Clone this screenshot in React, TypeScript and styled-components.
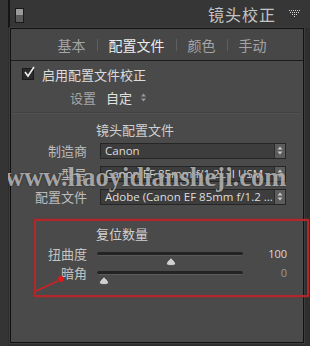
import React from "react";
import styled, { createGlobalStyle } from "styled-components";

const GlobalStyle = createGlobalStyle`
  html, body {
    margin: 0;
    padding: 0;
    background: #2c2c2c;
  }
  body {
    font-family: "Noto Sans CJK SC", "Noto Sans", sans-serif;
  }
`;

const Page = styled.div`
  width: 310px;
  height: 346px;
  display: flex;
  flex-direction: column;
  background: #2e2e2e;
  border-left: 8px solid #343434;
  box-sizing: border-box;
  position: relative;
  overflow: hidden;
`;

const Header = styled.div`
  height: 28px;
  display: flex;
  align-items: center;
  padding: 0 10px 0 5px;
  background: #363636;
  border-left: 2px solid #151515;
`;

const SoloBox = styled.div`
  width: 7px;
  height: 13px;
  border: 1px solid #1a1a1a;
  background: linear-gradient(#9a9a9a 0 50%, #5a5a5a 50% 100%);
  margin-top: 2px;
`;

const Title = styled.div`
  flex: 1;
  text-align: right;
  color: #c4c4c4;
  font-size: 16px;
  letter-spacing: 1px;
  padding-right: 13px;
`;

const Panel = styled.div`
  flex: 1;
  margin: 0 6px 3px 2px;
  border: 1px solid #121212;
  outline: 1px solid #3c3c3c;
  background: #4a4a4a;
  display: flex;
  flex-direction: column;
  position: relative;
`;

const Tabs = styled.div`
  height: 31px;
  display: flex;
  align-items: center;
  justify-content: center;
  border-bottom: 1px solid #1c1c1c;
  background: #474747;
  padding-left: 10px;
`;

const Tab = styled.span<{ $active?: boolean }>`
  font-size: 14px;
  color: ${({ $active }) => ($active ? "#ececec" : "#a4a4a4")};
  padding: 0 11px;
`;

const TabSep = styled.span`
  width: 1px;
  height: 12px;
  background: #5e5e5e;
`;

const Section = styled.div<{ $gap?: number }>`
  display: flex;
  flex-direction: column;
  gap: ${({ $gap }) => $gap ?? 0}px;
`;

const CheckRow = styled.div`
  display: flex;
  align-items: center;
  gap: 8px;
  height: 22px;
  margin-top: 2px;
  padding-left: 11px;
  color: #dcdcdc;
  font-size: 13px;
`;

const CheckBox = styled.span`
  width: 10px;
  height: 10px;
  background: #2a2a2a;
  border: 1px solid #1a1a1a;
  position: relative;
  display: inline-block;
`;

const SetRow = styled.div`
  display: flex;
  align-items: center;
  height: 24px;
  padding-left: 59px;
  font-size: 13px;
`;

const SetLabel = styled.span`
  color: #a6a6a6;
  margin-right: 10px;
`;

const SetValue = styled.span`
  color: #e0e0e0;
  margin-right: 9px;
`;

const Divider = styled.div`
  height: 1px;
  margin: 3px 2px 0;
  background: #424242;
  border-bottom: 1px solid #515151;
`;

const Heading = styled.div`
  height: 20px;
  margin-top: 6px;
  padding-left: 85px;
  color: #cfcfcf;
  font-size: 13px;
  line-height: 20px;
`;

const FieldRow = styled.div`
  display: grid;
  grid-template-columns: 76px 186px;
  column-gap: 13px;
  align-items: center;
  height: 21px;
`;

const Label = styled.span`
  text-align: right;
  color: #bdbdbd;
  font-size: 13px;
`;

const Select = styled.div`
  height: 16px;
  display: flex;
  align-items: center;
  background: #3d3d3d;
  border: 1px solid #262626;
  box-sizing: border-box;
  color: #dedede;
  font-family: "Open Sans", "Noto Sans", sans-serif;
  font-size: 11.5px;
  padding-left: 4px;
  overflow: hidden;
  white-space: nowrap;
`;

const SelectText = styled.span`
  flex: 1;
  overflow: hidden;
`;

const SelectArrows = styled.span`
  width: 10px;
  height: 14px;
  flex-shrink: 0;
  background: #5c5c5c;
  border-left: 1px solid #2c2c2c;
  display: flex;
  align-items: center;
  justify-content: center;
`;

const Highlight = styled.div`
  margin: 12px -6px 0 23px;
  height: 78px;
  border: 2px solid #b3262a;
  box-sizing: border-box;
  box-shadow: 0 0 2px rgba(200, 30, 30, 0.6);
  padding-top: 3px;
  position: relative;
`;

const SubHeading = styled.div`
  height: 20px;
  padding-left: 60px;
  color: #d0d0d0;
  font-size: 13px;
  line-height: 20px;
`;

const SliderRow = styled.div`
  display: grid;
  grid-template-columns: 51px 146px 34px;
  column-gap: 10px;
  align-items: center;
  height: 19px;
`;

const SliderLabel = styled.span`
  text-align: right;
  color: #c4c4c4;
  font-size: 13px;
`;

const Track = styled.div`
  height: 3px;
  background: #232323;
  border-bottom: 1px solid #5a5a5a;
  border-radius: 2px;
  position: relative;
`;

const Thumb = styled.span`
  position: absolute;
  top: -5px;
  width: 10px;
  height: 9px;
  margin-left: -5px;
`;

const SliderValue = styled.span<{ $dim?: boolean }>`
  text-align: right;
  color: ${({ $dim }) => ($dim ? "#9a9a9a" : "#d8d8d8")};
  font-family: "Open Sans", "Noto Sans", sans-serif;
  font-size: 11px;
`;

const Watermark = styled.div`
  position: absolute;
  left: -6px;
  top: 133px;
  font-family: "Liberation Serif", serif;
  font-size: 26.5px;
  font-weight: bold;
  color: rgba(200, 200, 200, 0.78);
  text-shadow: 0 0 2px rgba(0, 0, 0, 0.55);
  white-space: nowrap;
  pointer-events: none;
`;

const Arrows = () => (
  <svg width="6" height="9" viewBox="0 0 6 9">
    <path d="M0.5 3.5 L3 0.5 L5.5 3.5 Z M0.5 5.5 L3 8.5 L5.5 5.5 Z" fill="#c8c8c8" />
  </svg>
);

const SmallArrows = () => (
  <svg width="5" height="9" viewBox="0 0 5 9">
    <path d="M0 3.5 L2.5 0.5 L5 3.5 Z M0 5.5 L2.5 8.5 L5 5.5 Z" fill="#9a9a9a" />
  </svg>
);

const Tick = () => (
  <svg width="12" height="12" viewBox="0 0 12 12" style={{ position: "absolute", left: 0, top: -3 }}>
    <path d="M2 6 L5 10 L11 1" stroke="#eeeeee" strokeWidth="1.6" fill="none" />
  </svg>
);

const Triangle = () => (
  <svg width="11" height="8" viewBox="0 0 11 8">
    {[0, 2, 4, 6, 8, 10].map((x) => (
      <rect key={"a" + x} x={x} y={0} width={1} height={1} fill="#d0d0d0" />
    ))}
    {[1, 3, 5, 7, 9].map((x) => (
      <rect key={"b" + x} x={x} y={2} width={1} height={1} fill="#d0d0d0" />
    ))}
    {[3, 5, 7].map((x) => (
      <rect key={"c" + x} x={x} y={4} width={1} height={1} fill="#d0d0d0" />
    ))}
    <rect x={5} y={6} width={1} height={1} fill="#d0d0d0" />
  </svg>
);

const ThumbShape = () => (
  <svg width="10" height="9" viewBox="0 0 10 9">
    <path
      d="M5 0.5 C6 2.5 9.5 4.5 9.5 6.5 C9.5 8 8 8.5 5 8.5 C2 8.5 0.5 8 0.5 6.5 C0.5 4.5 4 2.5 5 0.5 Z"
      fill="#cfcfcf"
      stroke="#2a2a2a"
      strokeWidth="0.6"
    />
  </svg>
);

const Pointer = styled.svg`
  position: absolute;
  left: -2px;
  top: 52px;
`;

const sliders = [
  { label: "扭曲度", pos: 74, value: "100", dim: false },
  { label: "暗角", pos: 7, value: "0", dim: true },
];

export default function App() {
  return (
    <>
      <GlobalStyle />
      <Page>
        <Header>
          <SoloBox />
          <Title>镜头校正</Title>
          <Triangle />
        </Header>
        <Panel>
          <Tabs>
            <Tab>基本</Tab>
            <TabSep />
            <Tab $active>配置文件</Tab>
            <TabSep />
            <Tab>颜色</Tab>
            <TabSep />
            <Tab>手动</Tab>
          </Tabs>
          <Section>
            <CheckRow>
              <CheckBox>
                <Tick />
              </CheckBox>
              启用配置文件校正
            </CheckRow>
            <SetRow>
              <SetLabel>设置</SetLabel>
              <SetValue>自定</SetValue>
              <SmallArrows />
            </SetRow>
          </Section>
          <Divider />
          <Heading>镜头配置文件</Heading>
          <Section $gap={2}>
            <FieldRow>
              <Label>制造商</Label>
              <Select>
                <SelectText>Canon</SelectText>
                <SelectArrows>
                  <Arrows />
                </SelectArrows>
              </Select>
            </FieldRow>
            <FieldRow>
              <Label>型号</Label>
              <Select>
                <SelectText>Canon EF 85mm f/1.2L II USM</SelectText>
                <SelectArrows>
                  <Arrows />
                </SelectArrows>
              </Select>
            </FieldRow>
            <FieldRow>
              <Label>配置文件</Label>
              <Select>
                <SelectText>Adobe (Canon EF 85mm f/1.2 ...</SelectText>
                <SelectArrows>
                  <Arrows />
                </SelectArrows>
              </Select>
            </FieldRow>
          </Section>
          <Highlight>
            <SubHeading>复位数量</SubHeading>
            {sliders.map((s) => (
              <SliderRow key={s.label}>
                <SliderLabel>{s.label}</SliderLabel>
                <Track>
                  <Thumb style={{ left: `${s.pos}px` }}>
                    <ThumbShape />
                  </Thumb>
                </Track>
                <SliderValue $dim={s.dim}>{s.value}</SliderValue>
              </SliderRow>
            ))}
            <Pointer width="30" height="20" viewBox="0 0 30 20">
              <path d="M2 18 L24 8" stroke="#d42020" strokeWidth="1.5" />
              <circle cx="27" cy="6" r="3" fill="#e01818" />
            </Pointer>
          </Highlight>
          <Watermark>www.haoyidiansheji.com</Watermark>
        </Panel>
      </Page>
    </>
  );
}
